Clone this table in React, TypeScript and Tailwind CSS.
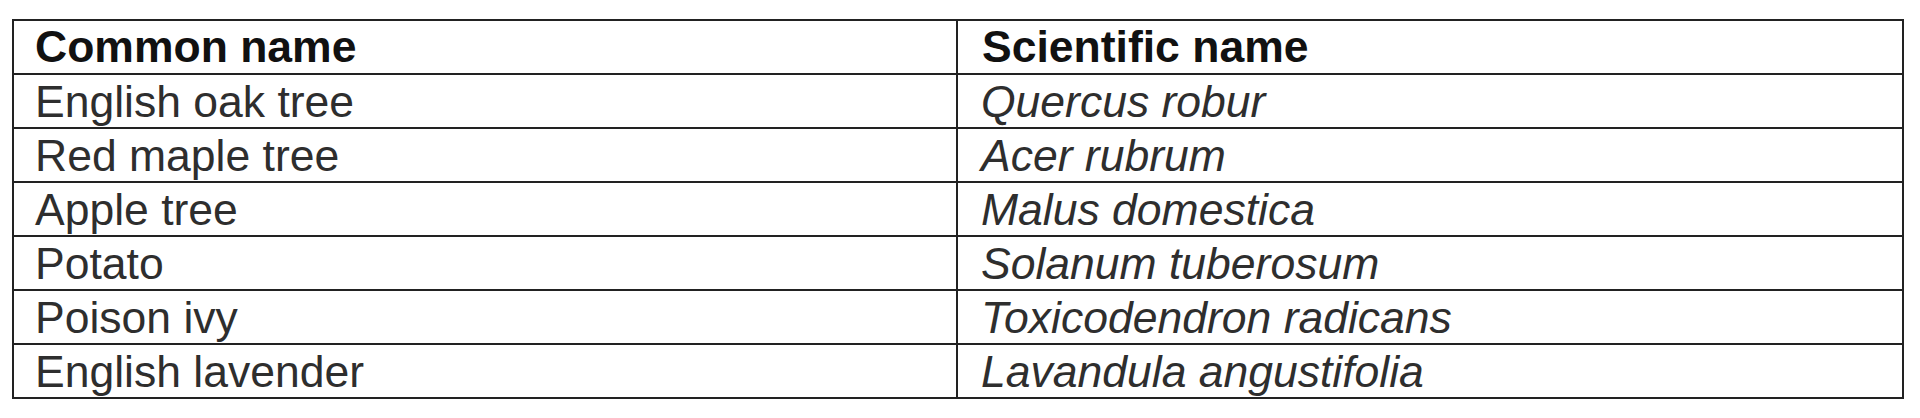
const rows = [
  { common: "English oak tree", scientific: "Quercus robur" },
  { common: "Red maple tree", scientific: "Acer rubrum" },
  { common: "Apple tree", scientific: "Malus domestica" },
  { common: "Potato", scientific: "Solanum tuberosum" },
  { common: "Poison ivy", scientific: "Toxicodendron radicans" },
  { common: "English lavender", scientific: "Lavandula angustifolia" },
];

const App = () => {
  return (
    <div className="w-[1920px] h-[418px] bg-white pt-[19px] pl-[12px] font-['Liberation_Sans',Arial,sans-serif]">
      <div className="w-[1892px] border-t-2 border-l-2 border-[#222]">
        {/* Header */}
        <div className="grid grid-cols-[944px_1fr]">
          <div className="h-[54px] border-r-2 border-b-2 border-[#222] pl-[21px] text-[44.5px] leading-[52px] font-bold text-[#111]">
            Common name
          </div>
          <div className="h-[54px] border-r-2 border-b-2 border-[#222] pl-[24px] text-[44.5px] leading-[52px] font-bold text-[#111]">
            Scientific name
          </div>
        </div>
        {rows.map((r) => (
          <div key={r.common} className="grid grid-cols-[944px_1fr]">
            <div className="h-[54px] border-r-2 border-b-2 border-[#222] pl-[21px] text-[44.5px] leading-[53px] text-[#2e2e2e]">
              {r.common}
            </div>
            <div className="h-[54px] border-r-2 border-b-2 border-[#222] pl-[23px] text-[44.5px] leading-[53px] italic text-[#2e2e2e]">
              {r.scientific}
            </div>
          </div>
        ))}
      </div>
    </div>
  );
};

export default App;
